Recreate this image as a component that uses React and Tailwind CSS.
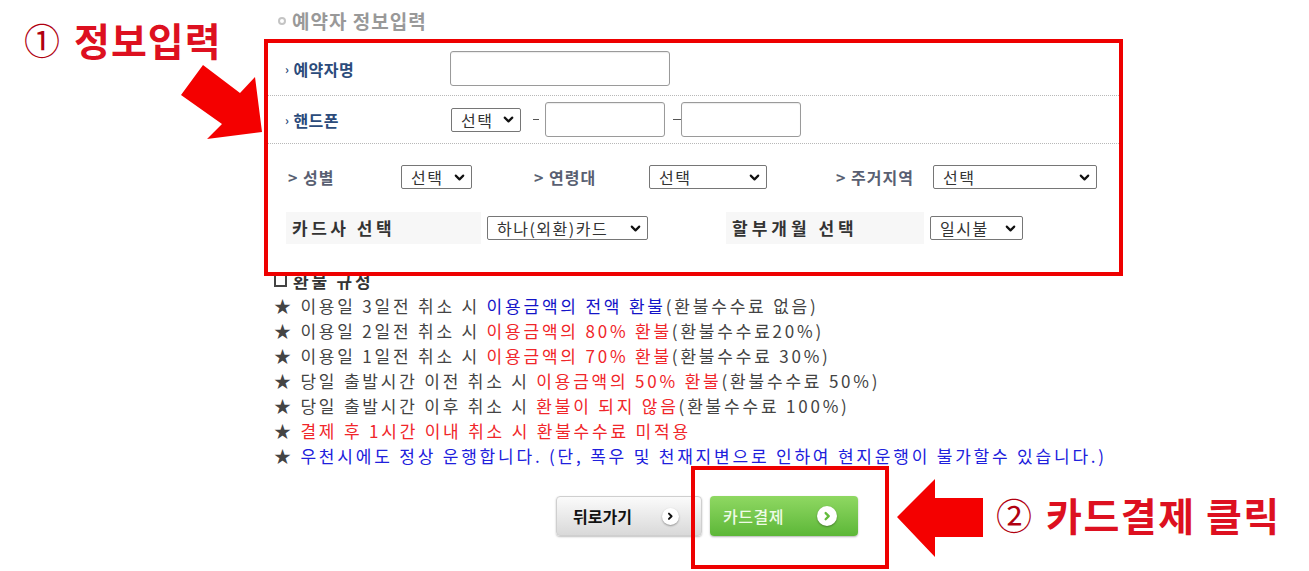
import { ChevronDown } from 'lucide-react'

function FakeSelect({ label, className }) {
  return (
    <div
      className={`flex items-center justify-between h-[24px] border border-[#767676] rounded-[2px] bg-white pl-[9px] pr-[4px] text-[16px] font-normal tracking-[1.5px] leading-none text-[#333] ${className}`}
    >
      <span>{label}</span>
      <ChevronDown className="w-[15px] h-[15px] text-[#111]" strokeWidth={3.4} />
    </div>
  )
}

function TextBox({ className }) {
  return (
    <div
      className={`h-[35px] border border-[#9a9a9a] rounded-[3px] bg-white shadow-[inset_0_1px_1px_rgba(0,0,0,0.08)] ${className}`}
    />
  )
}

function CircleChevron({ color, size }) {
  return (
    <span
      className={`flex items-center justify-center rounded-full bg-white shadow-[0_1px_2px_rgba(0,0,0,0.35)] ${size}`}
    >
      <svg viewBox="0 0 24 24" className="w-[62%] h-[62%]" fill="none" stroke={color} strokeWidth="4.5" strokeLinecap="round" strokeLinejoin="round">
        <polyline points="9 6 15 12 9 18" />
      </svg>
    </span>
  )
}

const rules = [
  [
    { t: '★ 이용일 3일전 취소 시 ' },
    { t: '이용금액의 전액 환불', c: 'text-[#1414c8]' },
    { t: '(환불수수료 없음)' },
  ],
  [
    { t: '★ 이용일 2일전 취소 시 ' },
    { t: '이용금액의 80% 환불', c: 'text-[#f0262a]' },
    { t: '(환불수수료20%)' },
  ],
  [
    { t: '★ 이용일 1일전 취소 시 ' },
    { t: '이용금액의 70% 환불', c: 'text-[#f0262a]' },
    { t: '(환불수수료 30%)' },
  ],
  [
    { t: '★ 당일 출발시간 이전 취소 시 ' },
    { t: '이용금액의 50% 환불', c: 'text-[#f0262a]' },
    { t: '(환불수수료 50%)' },
  ],
  [
    { t: '★ 당일 출발시간 이후 취소 시 ' },
    { t: '환불이 되지 않음', c: 'text-[#f0262a]' },
    { t: '(환불수수료 100%)' },
  ],
  [
    { t: '★ ' },
    { t: '결제 후 1시간 이내 취소 시 환불수수료 미적용', c: 'text-[#f0262a]' },
  ],
  [
    { t: '★ ' },
    { t: '우천시에도 정상 운행합니다. (단, 폭우 및 천재지변으로 인하여 현지운행이 불가할수 있습니다.)', c: 'text-[#2020dc]' },
  ],
]

export default function App() {
  return (
    <div className="relative w-[1309px] h-[571px] overflow-hidden bg-white font-['Noto_Sans_CJK_KR','Noto_Sans',sans-serif]">
      <div className="ml-[264px] w-[859px]">
        {/* title */}
        <div className="h-[42px] flex items-center pl-[14px] gap-[6px] text-[19px] font-semibold tracking-[1px] text-[#999]">
          <span className="w-[8px] h-[8px] rounded-full border-2 border-[#c4c4c4]" />
          <span>예약자 정보입력</span>
        </div>

        {/* form */}
        <div className="pb-[22px]">
          <div className="h-[54px] flex items-center border-b border-dotted border-[#b8b8b8]">
            <div className="w-[186px] pl-[21px] flex items-center gap-[4px] text-[16px] font-bold tracking-[0.5px] text-[#2b4b7b]">
              <span className="text-[12px]">›</span>
              <span>예약자명</span>
            </div>
            <TextBox className="w-[220px]" />
          </div>

          <div className="h-[48px] flex items-center border-b border-dotted border-[#b8b8b8]">
            <div className="w-[187px] pl-[21px] flex items-center gap-[4px] text-[16px] font-bold tracking-[0.5px] text-[#2b4b7b]">
              <span className="text-[12px]">›</span>
              <span>핸드폰</span>
            </div>
            <FakeSelect label="선택" className="w-[70px]" />
            <span className="ml-[12px] w-[6px] h-[1px] bg-[#555]" />
            <TextBox className="ml-[6px] w-[120px]" />
            <span className="ml-[8px] w-[8px] h-[1px] bg-[#555]" />
            <TextBox className="w-[120px]" />
          </div>

          <div className="h-[66px] flex items-center text-[16px] font-bold tracking-[1px] text-[#595f72]">
            <div className="w-[137px] pl-[24px]">&gt; 성별</div>
            <FakeSelect label="선택" className="w-[71px]" />
            <div className="ml-[62px] w-[115px]">&gt; 연령대</div>
            <FakeSelect label="선택" className="w-[118px]" />
            <div className="ml-[69px] w-[97px]">&gt; 주거지역</div>
            <FakeSelect label="선택" className="w-[164px]" />
          </div>

          <div className="h-[36px] flex items-center">
            <div className="ml-[22px] w-[195px] h-[32px] flex items-center pl-[6px] bg-[#f7f7f7] text-[17px] font-bold tracking-[3.5px] text-[#333]">
              카드사 선택
            </div>
            <FakeSelect label="하나(외환)카드" className="ml-[6px] w-[161px]" />
            <div className="ml-[78px] w-[198px] h-[32px] flex items-center pl-[6px] bg-[#f7f7f7] text-[17px] font-bold tracking-[4px] text-[#333]">
              할부개월 선택
            </div>
            <FakeSelect label="일시불" className="ml-[6px] w-[93px]" />
          </div>
        </div>

        {/* refund rules */}
        <div className="pl-[10px] text-[17px] leading-[25px] tracking-[2.8px] text-[#444]">
          <div className="flex items-center gap-[6px] text-[#333]">
            <span className="w-[13px] h-[13px] border-2 border-[#444]" />
            <span className="font-bold">환불 규정</span>
          </div>
          {rules.map((line, i) => (
            <div key={i} className="whitespace-nowrap">
              {line.map((part, j) => (
                <span key={j} className={part.c}>
                  {part.t}
                </span>
              ))}
            </div>
          ))}
        </div>

        {/* buttons */}
        <div className="mt-[28px] ml-[292px] flex gap-[8px]">
          <div className="w-[146px] h-[40px] flex items-center justify-between pl-[16px] pr-[22px] rounded-[4px] border border-[#cfcfcf] bg-gradient-to-b from-[#fbfbfb] to-[#d9d9d9] shadow-[0_1px_2px_rgba(0,0,0,0.25)] text-[16px] font-bold text-[#111]">
            <span>뒤로가기</span>
            <CircleChevron color="#111" size="w-[17px] h-[17px]" />
          </div>
          <div className="w-[148px] h-[40px] flex items-center justify-between pl-[13px] pr-[21px] rounded-[4px] bg-gradient-to-b from-[#8fd862] to-[#5cb737] shadow-[0_1px_2px_rgba(0,0,0,0.3)] text-[16px] font-medium tracking-[0.5px] text-[#eefbe6]">
            <span>카드결제</span>
            <CircleChevron color="#63bb3c" size="w-[20px] h-[20px]" />
          </div>
        </div>
      </div>

      {/* annotations */}
      <div className="absolute left-[264px] top-[39px] w-[859px] h-[237px] border-4 border-[#ee0000]" />
      <div className="absolute left-[691px] top-[466px] w-[198px] h-[103px] border-4 border-[#ee0000]" />

      <svg className="absolute inset-0 pointer-events-none" width="1309" height="571" viewBox="0 0 1309 571">
        <polygon points="181,95 203,65 240,93 255,77 262,132 207,139 222,124" fill="#f40000" />
        <polygon points="897,517 935,479 935,498 983,498 983,537 935,537 935,557" fill="#f40000" />
      </svg>

      <div className="absolute left-[24px] top-[10px] flex items-center gap-[14px] text-[#dd1020]">
        <span className="text-[36px] font-normal text-[#b00010]">①</span>
        <span className="text-[39px] font-bold tracking-[1px]">정보입력</span>
      </div>
      <div className="absolute left-[996px] top-[485px] flex items-center gap-[14px] text-[#dd1020]">
        <span className="text-[36px] font-normal text-[#b00010]">②</span>
        <span className="text-[39px] font-bold tracking-[1.5px]">카드결제 클릭</span>
      </div>
    </div>
  )
}
